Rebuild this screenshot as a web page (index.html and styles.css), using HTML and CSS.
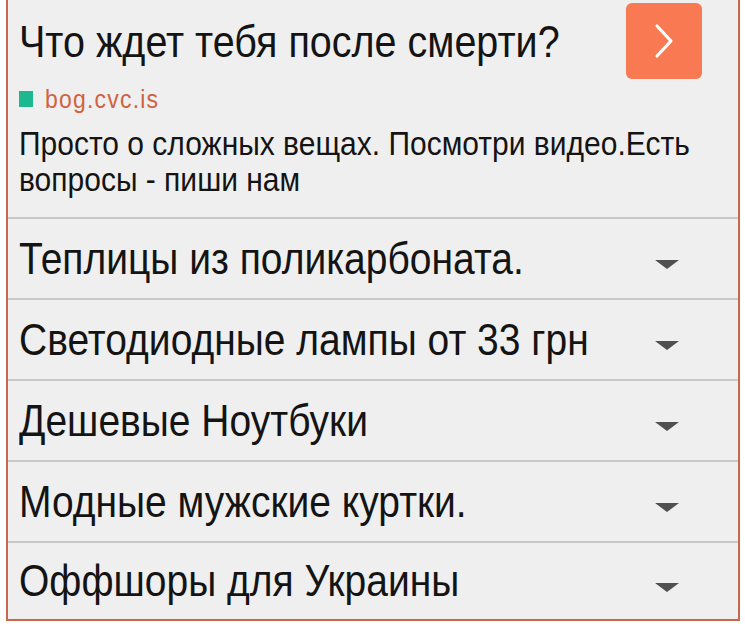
FILE: index.html
```html
<!DOCTYPE html>
<html lang="ru">
<head>
<meta charset="utf-8">
<link rel="stylesheet" href="styles.css">
</head>
<body>
<div class="ad">
  <div class="head">
    <div class="top">
      <div class="title">Что ждет тебя после смерти?</div>
      <div class="go">
        <svg width="24" height="40" viewBox="0 0 24 40"><polyline points="5,5 19,20 5,35" fill="none" stroke="#fff" stroke-width="3.2" stroke-linecap="round" stroke-linejoin="round"/></svg>
      </div>
    </div>
    <div class="source"><span class="dot"></span><span class="domain">bog.cvc.is</span></div>
    <div class="desc"><span class="stretch">Просто о сложных вещах. Посмотри видео.Есть</span><br><span class="stretch">вопросы - пиши нам</span></div>
  </div>
  <div class="row"><span class="label">Теплицы из поликарбоната.</span><svg class="caret" width="24" height="9" viewBox="0 0 24 9"><polygon points="0,0 24,0 12,9" fill="#505050"/></svg></div>
  <div class="row"><span class="label">Светодиодные лампы от 33 грн</span><svg class="caret" width="24" height="9" viewBox="0 0 24 9"><polygon points="0,0 24,0 12,9" fill="#505050"/></svg></div>
  <div class="row"><span class="label">Дешевые Ноутбуки</span><svg class="caret" width="24" height="9" viewBox="0 0 24 9"><polygon points="0,0 24,0 12,9" fill="#505050"/></svg></div>
  <div class="row"><span class="label">Модные мужские куртки.</span><svg class="caret" width="24" height="9" viewBox="0 0 24 9"><polygon points="0,0 24,0 12,9" fill="#505050"/></svg></div>
  <div class="row last"><span class="label">Оффшоры для Украины</span><svg class="caret" width="24" height="9" viewBox="0 0 24 9"><polygon points="0,0 24,0 12,9" fill="#505050"/></svg></div>
</div>
</body>
</html>
```
FILE: styles.css
```css
html, body {
  margin: 0;
  padding: 0;
  background: #ffffff;
}
body {
  font-family: "Liberation Sans", Arial, sans-serif;
  color: #141414;
}
.ad {
  width: 730px;
  margin-left: 6px;
  border: 2px solid #c8674b;
  border-top: 0;
  background: #efefef;
}
.head {
  padding: 0 36px 0 11px;
  height: 217px;
  border-bottom: 2px solid #c9c9c9;
}
.top {
  display: flex;
  align-items: flex-start;
  justify-content: space-between;
}
.title {
  font-size: 39.5px;
  line-height: 46px;
  margin-top: 18px;
  transform: scaleY(1.13);
}
.go {
  width: 76px;
  height: 76px;
  margin-top: 3px;
  border-radius: 6px;
  background: #f87952;
  display: flex;
  align-items: center;
  justify-content: center;
}
.source {
  display: flex;
  align-items: center;
  margin-top: 9px;
  height: 22px;
}
.dot {
  width: 14px;
  height: 16px;
  background: #1db890;
  margin-right: 12px;
}
.domain {
  font-size: 23px;
  color: #d0633f;
  letter-spacing: 1.2px;
  transform: scaleY(1.1);
}
.desc {
  font-size: 30px;
  line-height: 36px;
  margin-top: 16px;
  padding-right: 10px;
}
.stretch {
  display: inline-block;
  transform: scaleY(1.12);
}
.row {
  display: flex;
  align-items: center;
  justify-content: space-between;
  height: 79px;
  padding: 0 59px 0 11px;
  border-bottom: 2px solid #c9c9c9;
}
.row.last {
  height: 76px;
  border-bottom: 0;
}
.label {
  font-size: 39px;
  transform: scaleY(1.14);
}
.caret {
  margin-top: 12px;
}
```
